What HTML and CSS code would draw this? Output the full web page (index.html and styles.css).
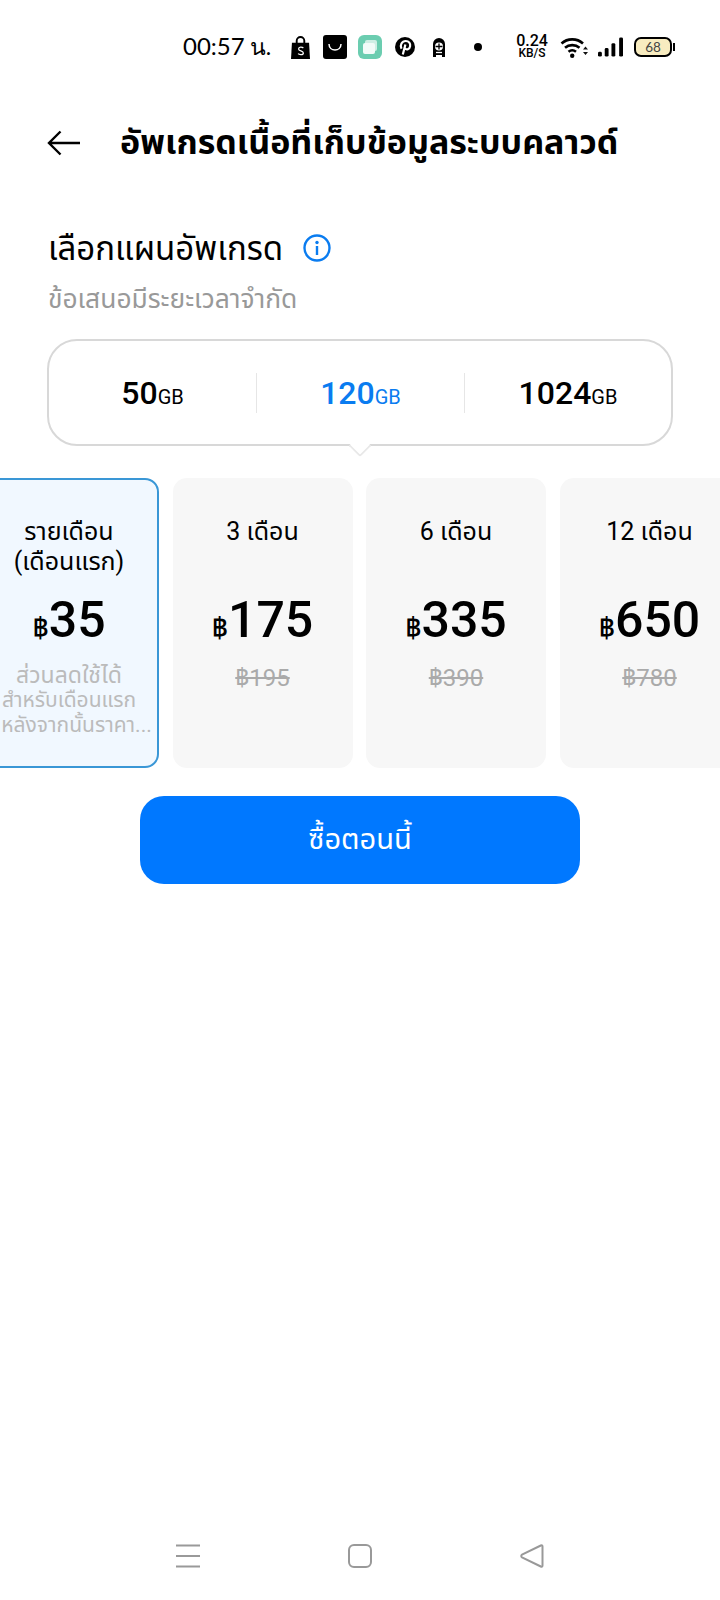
FILE: index.html
```html
<!DOCTYPE html>
<html lang="th">
<head>
    <meta charset="UTF-8">
    <meta name="viewport" content="width=device-width, initial-scale=1.0">
    <title>อัพเกรดเนื้อที่เก็บข้อมูลระบบคลาวด์</title>
    <link rel="stylesheet" href="styles.css">
</head>
<body>
    <div class="screen">
        <!-- status bar -->
        <div class="status-bar">
            <span class="clock">00:57 <span class="clock-thai">น.</span></span>
            <svg class="st-icon st-shopee" viewBox="0 0 20 24"><path d="M1 7h18l1 17H0z" fill="#000"/><path d="M6 8V5a4 4 0 0 1 8 0v3" fill="none" stroke="#000" stroke-width="2"/><path d="M13 12.500c-1-1-5-1.500-5 1 0 2.500 5 1.500 5 4.200 0 2.500-4.500 2-5.500 .8" fill="none" stroke="#fff" stroke-width="1.300"/></svg>
            <svg class="st-icon st-bag" viewBox="0 0 24 24"><rect width="24" height="24" rx="3" fill="#000"/><path d="M6 9c0 8 12 8 12 0" fill="none" stroke="#fff" stroke-width="1.500"/></svg>
            <svg class="st-icon st-notes" viewBox="0 0 24 24"><rect width="24" height="24" rx="6" fill="#6bcdb0"/><rect x="7" y="5" width="12" height="11" rx="2" fill="#cfeee4"/><rect x="5" y="8" width="12" height="11" rx="2" fill="#f2fbf8"/></svg>
            <svg class="st-icon st-pin" viewBox="0 0 20 20"><circle cx="10" cy="10" r="10" fill="#000"/><path d="M6.500 11.800C4.500 8 7 4 10.700 4c3.300 0 5 2.500 4.400 5.400-.5 2.900-3.600 4-5.200 2M10.400 7.500 7.800 17.500" fill="none" stroke="#fff" stroke-width="2.200"/></svg>
            <svg class="st-icon st-app" viewBox="0 0 14 20"><path d="M1 20V7a6 6 0 0 1 12 0v13h-3v-2H4v2z" fill="#000"/><circle cx="7" cy="9.500" r="4" fill="#fff"/><path d="M3.500 9.500h7M7 6.500v6" stroke="#000" stroke-width="1.300"/><path d="M4 15.500h6" stroke="#fff" stroke-width="1.300"/></svg>
            <span class="st-dot"></span>
            <div class="speed"><span>0.24</span><span class="speed-unit">KB/S</span></div>
            <svg class="st-icon st-wifi" viewBox="0 0 28 22"><path d="M1.500 7.500c6-5.500 15.500-5.500 21.500 0M5 11.800c4-3.600 10.500-3.600 14.500 0M8.500 15.800c2.200-1.800 5.300-1.800 7.500 0" fill="none" stroke="#000" stroke-width="2.600"/><circle cx="12.200" cy="19.800" r="2.200" fill="#000"/><path d="M23 13.500h5L25.500 10.500zM23 16h5l-2.500 3z" fill="#111"/></svg>
            <svg class="st-icon st-signal" viewBox="0 0 26 20"><rect x="0" y="15" width="4" height="5" rx="1.500"/><rect x="7" y="11" width="4" height="9" rx="1.500"/><rect x="14" y="6" width="4" height="14" rx="1.500"/><rect x="22" y="0" width="4" height="20" rx="1.500"/></svg>
            <div class="battery"><div class="battery-body">68</div><span class="battery-tip"></span></div>
        </div>

        <!-- header -->
        <div class="header">
            <svg class="back-arrow" viewBox="0 0 34 26"><path d="M33 13H2M13.500 1.500 2 13l11.500 11.500" fill="none" stroke="#000" stroke-width="2.400"/></svg>
            <h1 class="page-title">อัพเกรดเนื้อที่เก็บข้อมูลระบบคลาวด์</h1>
        </div>

        <div class="section">
            <div class="section-head">
                <h2 class="section-title">เลือกแผนอัพเกรด</h2>
                <svg class="info-icon" viewBox="0 0 28 28"><circle cx="14" cy="14" r="12.500" fill="none" stroke="#0a7cf0" stroke-width="2.400"/><circle cx="14" cy="8.500" r="1.700" fill="#0a7cf0"/><rect x="12.800" y="12" width="2.400" height="9" fill="#0a7cf0"/></svg>
            </div>
            <div class="section-sub">ข้อเสนอมีระยะเวลาจำกัด</div>
        </div>

        <!-- storage picker -->
        <div class="storage-box">
            <div class="storage-item">50<small>GB</small></div>
            <div class="storage-item active">120<small>GB</small></div>
            <div class="storage-item">1024<small>GB</small></div>
            <span class="storage-caret"></span>
        </div>

        <!-- plans -->
        <div class="plans">
            <div class="plan selected">
                <div class="plan-name">รายเดือน<br>(เดือนแรก)</div>
                <div class="plan-price"><span class="baht">฿</span>35</div>
                <div class="plan-note"><span class="note-first">ส่วนลดใช้ได้</span>สำหรับเดือนแรก<span class="note-last">หลังจากนั้นราคา...</span></div>
            </div>
            <div class="plan">
                <div class="plan-name">3 เดือน</div>
                <div class="plan-price"><span class="baht">฿</span>175</div>
                <div class="plan-old">฿195</div>
            </div>
            <div class="plan">
                <div class="plan-name">6 เดือน</div>
                <div class="plan-price"><span class="baht">฿</span>335</div>
                <div class="plan-old">฿390</div>
            </div>
            <div class="plan">
                <div class="plan-name">12 เดือน</div>
                <div class="plan-price"><span class="baht">฿</span>650</div>
                <div class="plan-old">฿780</div>
            </div>
        </div>

        <button class="buy-btn">ซื้อตอนนี้</button>

        <!-- nav bar -->
        <div class="nav-bar">
            <svg class="nav-icon" viewBox="0 0 24 24"><path d="M0 1.500h24M0 12h24M0 22.500h24" fill="none" stroke="#999" stroke-width="2"/></svg>
            <svg class="nav-icon" viewBox="0 0 24 24"><rect x="1" y="1" width="22" height="22" rx="5" fill="none" stroke="#999" stroke-width="2"/></svg>
            <svg class="nav-icon" viewBox="0 0 24 24"><path d="M22.500 2.500v19c0 1-.8 1.400-1.700 1L2 13.300c-1-.6-1-2 0-2.600L20.800 1.500c.9-.4 1.700 0 1.700 1z" fill="none" stroke="#999" stroke-width="2"/></svg>
        </div>
    </div>
</body>
</html>
```

FILE: styles.css
```css
* {
    box-sizing: border-box;
}

body {
    margin: 0;
    background-color: #fff;
    font-family: Roboto, "Noto Sans Thai", "Noto Sans", sans-serif;
    color: #000;
}

.screen {
    width: 720px;
    height: 1600px;
    overflow: hidden;
    display: flex;
    flex-direction: column;
}

/* status bar */
.status-bar {
    height: 94px;
    padding-left: 183px;
    display: flex;
    align-items: center;
}

.clock {
    font-family: Lato, Roboto, sans-serif;
    font-size: 24px;
    width: 108px;
    white-space: nowrap;
}

.clock-thai {
    font-size: 23px;
    margin-left: -1px;
}

.st-icon {
    flex: none;
    display: block;
}

.st-shopee { width: 19px; height: 23px; }
.st-bag { width: 24px; height: 24px; margin-left: 13px; }
.st-notes { width: 24px; height: 24px; margin-left: 11px; }
.st-pin { width: 20px; height: 20px; margin-left: 13px; }
.st-app { width: 14px; height: 20px; margin-left: 17px; }

.st-dot {
    width: 8px;
    height: 8px;
    margin-left: 28px;
    border-radius: 50%;
    background-color: #000;
}

.speed {
    width: 34px;
    margin-left: 33px;
    display: flex;
    flex-direction: column;
    align-items: center;
    font-family: Roboto, sans-serif;
    font-size: 16px;
    font-weight: 500;
    line-height: 14px;
    padding-bottom: 1px;
}

.speed-unit {
    font-size: 12px;
    line-height: 11px;
}

.st-wifi { width: 28px; height: 22px; margin-left: 11px; }
.st-signal { width: 25px; height: 20px; margin-left: 10px; }

.battery {
    margin-left: 11px;
    display: flex;
    align-items: center;
}

.battery-body {
    width: 38px;
    height: 20px;
    border: 2px solid #000;
    border-radius: 7px;
    background-color: #f8ecc0;
    font-family: Lato, Roboto, sans-serif;
    font-size: 13.500px;
    line-height: 16px;
    text-align: center;
    color: #444;
}

.battery-tip {
    width: 2px;
    height: 8px;
    margin-left: 1px;
    background-color: #000;
}

/* header */
.header {
    height: 52px;
    margin-top: 23px;
    padding-left: 47px;
    display: flex;
    align-items: center;
}

.back-arrow {
    width: 34px;
    height: 26px;
}

.page-title {
    margin: 0 0 0 39px;
    font-size: 34px;
    font-weight: 700;
    white-space: nowrap;
}

.section {
    margin-top: 56px;
    padding-left: 48px;
}

.section-head {
    height: 50px;
    display: flex;
    align-items: center;
}

.section-title {
    margin: 0;
    font-size: 33px;
    font-weight: 400;
}

.info-icon {
    width: 28px;
    height: 28px;
    margin-left: 20px;
    margin-bottom: 4px;
}

.section-sub {
    margin-top: 6px;
    font-size: 26.400px;
    line-height: 36px;
    color: #999;
}

/* storage picker */
.storage-box {
    position: relative;
    height: 107px;
    margin: 22px 47px 0;
    display: grid;
    grid-template-columns: 207px 208px 1fr;
    align-items: center;
    border: 2px solid #d8d8d8;
    border-radius: 30px;
    text-align: center;
}

.storage-item {
    height: 40px;
    font-size: 32px;
    font-weight: 500;
    line-height: 40px;
    border-left: 1px solid #e6e6e6;
}

.storage-item:first-child {
    border-left: none;
}

.storage-item small {
    font-size: 20px;
    font-weight: 400;
}

.storage-item.active {
    color: #0a7cf0;
}

.storage-caret {
    position: absolute;
    left: 303px;
    bottom: -10px;
    width: 16px;
    height: 16px;
    background-color: #fff;
    border-right: 2px solid #e8e8e8;
    border-bottom: 2px solid #e8e8e8;
    transform: rotate(45deg);
    border-bottom-right-radius: 3px;
}

/* plans */
.plans {
    margin: 32px 0 0 -21px;
    display: flex;
    gap: 13.500px;
}

.plan {
    flex: none;
    width: 180px;
    height: 290px;
    padding-top: 39px;
    border-radius: 14px;
    background-color: #f7f7f7;
    text-align: center;
}

.plan.selected {
    background-color: #f1f8ff;
    border: 2px solid #3a97d6;
    padding-top: 37px;
}

.plan-name {
    height: 60px;
    font-size: 25px;
    line-height: 30px;
}

.plan-price {
    margin-top: 13px;
    font-size: 50px;
    font-weight: 500;
    line-height: 60px;
}

.baht {
    font-size: 28px;
}

.plan-note {
    margin-top: 5px;
    font-size: 21px;
    line-height: 25px;
    color: #bbb;
    white-space: nowrap;
}

.note-first {
    display: block;
    font-size: 23px;
}

.note-last {
    display: block;
    padding-left: 15px;
}

.plan-old {
    margin-top: 3px;
    font-size: 24px;
    color: #aaa;
    text-decoration: line-through;
}

.buy-btn {
    display: block;
    width: 440px;
    height: 88px;
    margin: 28px 0 0 140px;
    border: none;
    border-radius: 24px;
    background-color: #0078ff;
    color: #fff;
    font-family: inherit;
    font-size: 29px;
}

/* nav bar */
.nav-bar {
    margin-top: auto;
    margin-bottom: 32px;
    padding-left: 176px;
    display: flex;
    gap: 148px;
}

.nav-icon {
    width: 24px;
    height: 24px;
}
```
